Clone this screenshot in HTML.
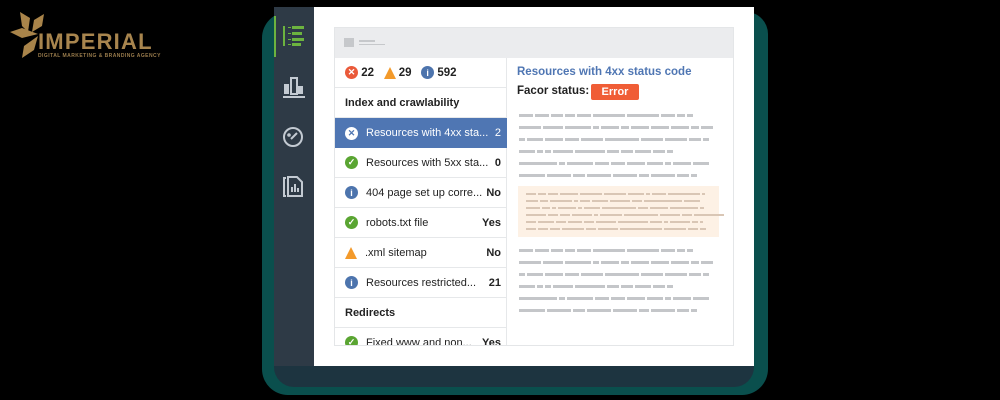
<!DOCTYPE html>
<html><head><meta charset="utf-8"><style>
*{margin:0;padding:0;box-sizing:border-box}
body{width:1000px;height:400px;background:#000;position:relative;overflow:hidden;font-family:"Liberation Sans",sans-serif}
.abs{position:absolute}
.teal{left:262px;top:12px;width:506px;height:383px;background:#0a4f4d;border-radius:26px 22px 26px 26px}
.navy{left:274px;top:7px;width:480px;height:380px;background:#1d3440;border-radius:0 0 20px 20px}
.side{left:274px;top:7px;width:40px;height:359px;background:#2e3a46}
.panel{left:314px;top:7px;width:440px;height:359px;background:#fff}
.card{left:334px;top:27px;width:400px;height:319px;border:1px solid #e4e6e8;background:#fff;overflow:hidden}
.hdr{left:0;top:0;width:400px;height:30px;background:#ebecee}
.row{position:absolute;left:0;width:172px;height:30px;border-bottom:1px solid #e6e8ea;font-size:11px;color:#222;display:flex;align-items:center;padding-left:10px}
.row .t{margin-left:8px;flex:1;white-space:nowrap}
.row .v{font-weight:bold;margin-right:6px}
.ic{width:13px;height:13px;border-radius:50%;color:#fff;font-size:9px;font-weight:bold;display:flex;align-items:center;justify-content:center;flex:none}
.g{background:#5aa532}.b{background:#4d74ad}.r{background:#ea5a3a}
.w{width:0;height:0;border-left:6px solid transparent;border-right:6px solid transparent;border-bottom:12px solid #f39a2b;flex:none}
.ln{position:absolute;height:3px;display:flex;gap:2px}
.ln span{display:block;height:3px;background:#c4c6c9}
.pk span{background:#d9c6b5;height:2px}
</style></head><body>
<svg class="abs" style="left:8px;top:8px" width="40" height="52" viewBox="0 0 40 52">
<g fill="#a9844a"><path d="M12 4 L22 10 L20 24 L14 18Z"/><path d="M36 6 L34 18 L24 24 L26 12Z"/><path d="M2 24 L14 20 L30 26 L14 30Z"/><path d="M30 28 L26 42 L14 50 L16 38Z"/></g></svg>
<div class="abs" style="left:38px;top:31px;font-size:22px;font-weight:bold;color:#a8854e;letter-spacing:1.2px;line-height:22px">IMPERIAL</div>
<div class="abs" style="left:38px;top:53px;font-size:5px;font-weight:bold;color:#9a7c4c;letter-spacing:0.45px;white-space:nowrap">DIGITAL MARKETING &amp; BRANDING AGENCY</div>

<div class="abs teal"></div>
<div class="abs navy"></div>
<div class="abs side"></div>
<div class="abs" style="left:274px;top:16px;width:2px;height:41px;background:#6cb33f"></div>
<svg class="abs" style="left:280px;top:24px" width="26" height="24"><g fill="#6cb33f"><rect x="3" y="2" width="2" height="20"/><rect x="8" y="3" width="3" height="1"/><rect x="8" y="9" width="3" height="1"/><rect x="8" y="15" width="3" height="1"/><rect x="8" y="20" width="3" height="1"/><rect x="12" y="2" width="12" height="3"/><rect x="12" y="8" width="10" height="3"/><rect x="12" y="14" width="12" height="3"/><rect x="12" y="19" width="9" height="3"/></g></svg>
<svg class="abs" style="left:282px;top:76px" width="24" height="22" fill="none" stroke="#c3cad2" stroke-width="2"><rect x="2" y="8" width="5" height="10" fill="#c3cad2" stroke="none"/><rect x="9" y="2" width="6" height="16"/><rect x="16" y="10" width="5" height="8" fill="#c3cad2" stroke="none"/><line x1="1" y1="21" x2="23" y2="21"/></svg>
<svg class="abs" style="left:282px;top:126px" width="22" height="22" fill="none" stroke="#c3cad2" stroke-width="2"><circle cx="11" cy="11" r="9"/><line x1="9" y1="13" x2="15" y2="7"/><circle cx="7" cy="9" r="0.8"/></svg>
<svg class="abs" style="left:282px;top:175px" width="22" height="22" fill="none" stroke="#c3cad2" stroke-width="2"><path d="M4 3 H2 V21 H4"/><path d="M6 2 H15 L20 7 V21 H6Z"/><line x1="10" y1="17" x2="10" y2="12"/><line x1="13" y1="17" x2="13" y2="9"/><line x1="16" y1="17" x2="16" y2="13"/></svg>

<div class="abs panel"></div>
<div class="abs card">
 <div class="abs hdr"><div class="abs" style="left:9px;top:10px;width:10px;height:9px;background:#c6c8cb"></div><div class="abs" style="left:24px;top:12px;width:16px;height:2px;background:#c6c8cb"></div><div class="abs" style="left:24px;top:16px;width:26px;height:1px;background:#c6c8cb"></div></div>
 <div class="abs" style="left:171px;top:30px;width:1px;height:290px;background:#e6e8ea"></div>
 <div class="row" style="top:30px;font-weight:bold;font-size:11.5px"><div class="ic r">✕</div>&nbsp;22&nbsp;&nbsp;&nbsp;<div class="w"></div>&nbsp;29&nbsp;&nbsp;&nbsp;<div class="ic b">i</div>&nbsp;592</div>
 <div class="row" style="top:60px;font-weight:bold">Index and crawlability</div>
 <div class="row" style="top:90px;background:#4f76b3;color:#fff;border:none"><div class="ic" style="background:#fff;color:#4f76b3">✕</div><span class="t">Resources with 4xx sta...</span><span class="v" style="font-weight:normal">2</span></div>
 <div class="row" style="top:120px"><div class="ic g">✓</div><span class="t">Resources with 5xx sta...</span><span class="v">0</span></div>
 <div class="row" style="top:150px"><div class="ic b">i</div><span class="t">404 page set up corre...</span><span class="v">No</span></div>
 <div class="row" style="top:180px"><div class="ic g">✓</div><span class="t">robots.txt file</span><span class="v">Yes</span></div>
 <div class="row" style="top:210px"><div class="w"></div><span class="t">.xml sitemap</span><span class="v">No</span></div>
 <div class="row" style="top:240px"><div class="ic b">i</div><span class="t">Resources restricted...</span><span class="v">21</span></div>
 <div class="row" style="top:270px;font-weight:bold">Redirects</div>
 <div class="row" style="top:300px"><div class="ic g">✓</div><span class="t">Fixed www and non...</span><span class="v">Yes</span></div>

 <div class="abs" style="left:182px;top:38px;font-size:11.5px;font-weight:bold;color:#4f76b3">Resources with 4xx status code</div>
 <div class="abs" style="left:182px;top:57px;font-size:11.5px;font-weight:bold;color:#222">Facor status:</div>
 <div class="abs" style="left:256px;top:56px;width:48px;height:16px;background:#f05d36;border-radius:2px;color:#fff;font-size:11px;font-weight:bold;text-align:center;line-height:16px">Error</div>

 <div class="ln" style="left:184px;top:86px"><span style="width:14px"></span><span style="width:14px"></span><span style="width:12px"></span><span style="width:10px"></span><span style="width:14px"></span><span style="width:32px"></span><span style="width:32px"></span><span style="width:14px"></span><span style="width:8px"></span><span style="width:6px"></span></div>
 <div class="ln" style="left:184px;top:98px"><span style="width:22px"></span><span style="width:20px"></span><span style="width:26px"></span><span style="width:6px"></span><span style="width:18px"></span><span style="width:8px"></span><span style="width:18px"></span><span style="width:18px"></span><span style="width:18px"></span><span style="width:8px"></span><span style="width:12px"></span></div>
 <div class="ln" style="left:184px;top:110px"><span style="width:6px"></span><span style="width:16px"></span><span style="width:18px"></span><span style="width:14px"></span><span style="width:22px"></span><span style="width:34px"></span><span style="width:22px"></span><span style="width:22px"></span><span style="width:12px"></span><span style="width:6px"></span></div>
 <div class="ln" style="left:184px;top:122px"><span style="width:16px"></span><span style="width:6px"></span><span style="width:6px"></span><span style="width:20px"></span><span style="width:30px"></span><span style="width:12px"></span><span style="width:12px"></span><span style="width:16px"></span><span style="width:12px"></span><span style="width:6px"></span></div>
 <div class="ln" style="left:184px;top:134px"><span style="width:38px"></span><span style="width:6px"></span><span style="width:26px"></span><span style="width:14px"></span><span style="width:14px"></span><span style="width:18px"></span><span style="width:16px"></span><span style="width:6px"></span><span style="width:18px"></span><span style="width:16px"></span></div>
 <div class="ln" style="left:184px;top:146px"><span style="width:26px"></span><span style="width:24px"></span><span style="width:12px"></span><span style="width:24px"></span><span style="width:24px"></span><span style="width:10px"></span><span style="width:24px"></span><span style="width:12px"></span><span style="width:6px"></span></div>

 <div class="abs" style="left:183px;top:158px;width:201px;height:51px;background:#fdf1e5"></div>
 <div class="ln pk" style="left:191px;top:165px"><span style="width:10px"></span><span style="width:8px"></span><span style="width:10px"></span><span style="width:18px"></span><span style="width:22px"></span><span style="width:22px"></span><span style="width:16px"></span><span style="width:4px"></span><span style="width:14px"></span><span style="width:32px"></span><span style="width:3px"></span></div>
 <div class="ln pk" style="left:191px;top:172px"><span style="width:12px"></span><span style="width:8px"></span><span style="width:22px"></span><span style="width:4px"></span><span style="width:10px"></span><span style="width:16px"></span><span style="width:20px"></span><span style="width:10px"></span><span style="width:38px"></span><span style="width:16px"></span></div>
 <div class="ln pk" style="left:191px;top:179px"><span style="width:14px"></span><span style="width:8px"></span><span style="width:4px"></span><span style="width:18px"></span><span style="width:4px"></span><span style="width:16px"></span><span style="width:34px"></span><span style="width:10px"></span><span style="width:18px"></span><span style="width:28px"></span><span style="width:4px"></span></div>
 <div class="ln pk" style="left:191px;top:186px"><span style="width:20px"></span><span style="width:10px"></span><span style="width:10px"></span><span style="width:20px"></span><span style="width:4px"></span><span style="width:22px"></span><span style="width:34px"></span><span style="width:20px"></span><span style="width:10px"></span><span style="width:30px"></span></div>
 <div class="ln pk" style="left:191px;top:193px"><span style="width:10px"></span><span style="width:16px"></span><span style="width:10px"></span><span style="width:14px"></span><span style="width:10px"></span><span style="width:20px"></span><span style="width:30px"></span><span style="width:12px"></span><span style="width:4px"></span><span style="width:20px"></span><span style="width:6px"></span><span style="width:3px"></span></div>
 <div class="ln pk" style="left:191px;top:200px"><span style="width:10px"></span><span style="width:10px"></span><span style="width:10px"></span><span style="width:22px"></span><span style="width:10px"></span><span style="width:20px"></span><span style="width:42px"></span><span style="width:22px"></span><span style="width:10px"></span><span style="width:6px"></span></div>

 <div class="ln" style="left:184px;top:221px"><span style="width:14px"></span><span style="width:14px"></span><span style="width:12px"></span><span style="width:10px"></span><span style="width:14px"></span><span style="width:32px"></span><span style="width:32px"></span><span style="width:14px"></span><span style="width:8px"></span><span style="width:6px"></span></div>
 <div class="ln" style="left:184px;top:233px"><span style="width:22px"></span><span style="width:20px"></span><span style="width:26px"></span><span style="width:6px"></span><span style="width:18px"></span><span style="width:8px"></span><span style="width:18px"></span><span style="width:18px"></span><span style="width:18px"></span><span style="width:8px"></span><span style="width:12px"></span></div>
 <div class="ln" style="left:184px;top:245px"><span style="width:6px"></span><span style="width:16px"></span><span style="width:18px"></span><span style="width:14px"></span><span style="width:22px"></span><span style="width:34px"></span><span style="width:22px"></span><span style="width:22px"></span><span style="width:12px"></span><span style="width:6px"></span></div>
 <div class="ln" style="left:184px;top:257px"><span style="width:16px"></span><span style="width:6px"></span><span style="width:6px"></span><span style="width:20px"></span><span style="width:30px"></span><span style="width:12px"></span><span style="width:12px"></span><span style="width:16px"></span><span style="width:12px"></span><span style="width:6px"></span></div>
 <div class="ln" style="left:184px;top:269px"><span style="width:38px"></span><span style="width:6px"></span><span style="width:26px"></span><span style="width:14px"></span><span style="width:14px"></span><span style="width:18px"></span><span style="width:16px"></span><span style="width:6px"></span><span style="width:18px"></span><span style="width:16px"></span></div>
 <div class="ln" style="left:184px;top:281px"><span style="width:26px"></span><span style="width:24px"></span><span style="width:12px"></span><span style="width:24px"></span><span style="width:24px"></span><span style="width:10px"></span><span style="width:24px"></span><span style="width:12px"></span><span style="width:6px"></span></div>
</div>
</body></html>
